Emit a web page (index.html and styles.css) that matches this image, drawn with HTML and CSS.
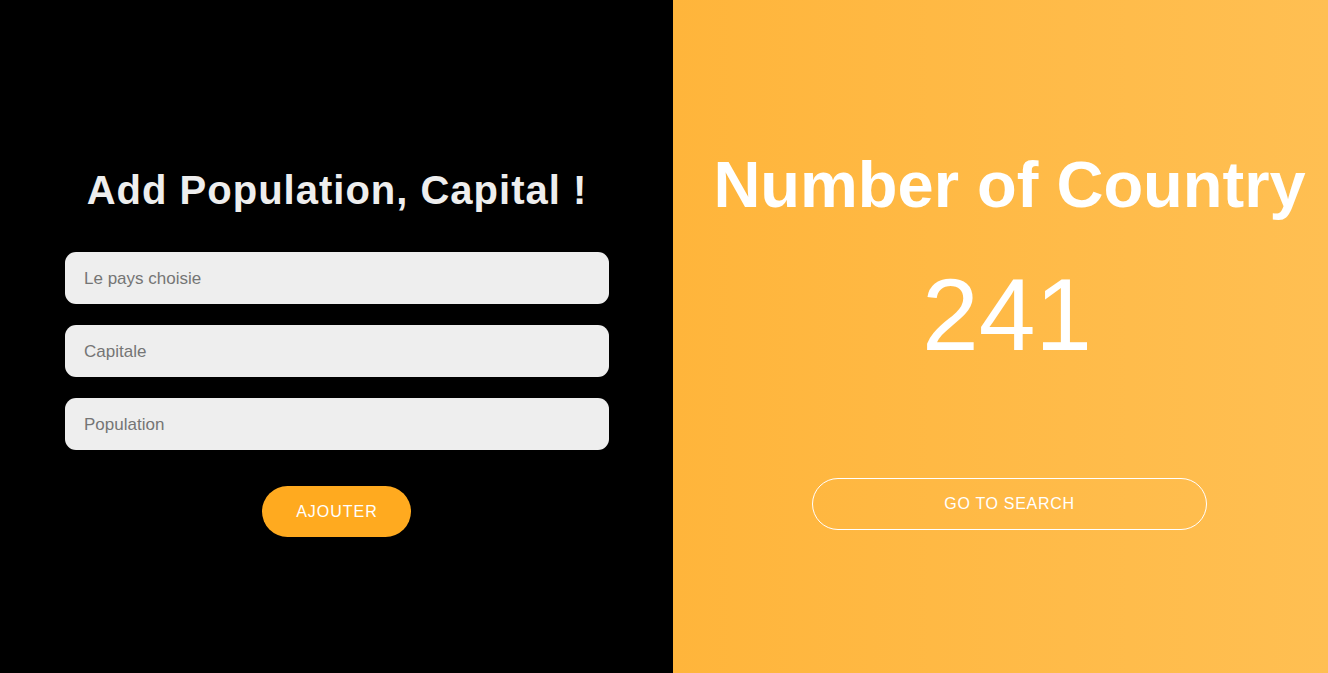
FILE: index.html
```html
<!DOCTYPE html>
<html lang="fr">
<head>
<meta charset="utf-8">
<title>Countries</title>
<link rel="stylesheet" href="styles.css">
</head>
<body>
<main class="page">
  <section class="panel-left">
    <h1 class="form-title">Add Population, Capital !</h1>
    <form class="form">
      <input class="field" type="text" placeholder="Le pays choisie">
      <input class="field" type="text" placeholder="Capitale">
      <input class="field" type="text" placeholder="Population">
      <button class="btn-add" type="button">AJOUTER</button>
    </form>
  </section>
  <section class="panel-right">
    <h2 class="count-title">Number of Country</h2>
    <div class="count">241</div>
    <button class="btn-search" type="button">GO TO SEARCH</button>
  </section>
</main>
</body>
</html>
```
FILE: styles.css
```css
* { box-sizing: border-box; }
html, body { margin: 0; padding: 0; height: 100%; }
body {
  font-family: "Liberation Sans", Arial, sans-serif;
  overflow: hidden;
}
.page {
  display: flex;
  width: 1328px;
  height: 673px;
}
.panel-left {
  width: 673px;
  flex: none;
  background: #000;
  padding: 166px 64px 0 65px;
  display: flex;
  flex-direction: column;
  align-items: center;
}
.form-title {
  margin: 0;
  font-size: 40px;
  line-height: 48px;
  font-weight: 700;
  letter-spacing: 1px;
  color: #eeeeee;
  text-align: center;
}
.form {
  margin-top: 38px;
  width: 544px;
  display: flex;
  flex-direction: column;
  align-items: center;
  gap: 21px;
}
.field {
  width: 100%;
  height: 52px;
  border: none;
  border-radius: 11px;
  background: #eeeeee;
  padding: 1px 19px 0;
  font-family: "Liberation Sans", Arial, sans-serif;
  font-size: 17px;
  color: #333;
  outline: none;
}
.field::placeholder { color: #757575; }
.btn-add {
  margin-top: 15px;
  margin-right: 1px;
  width: 149px;
  height: 51px;
  border: none;
  border-radius: 26px;
  background: #ffaa1f;
  color: #fff;
  font-family: "Liberation Sans", Arial, sans-serif;
  font-size: 16px;
  letter-spacing: 1px;
  padding: 0 0 0 1px;
}
.panel-right {
  flex: 1;
  min-width: 0;
  background: linear-gradient(90deg, #ffb53b 0%, #ffbf52 100%);
  padding: 146px 0 0 18px;
  display: flex;
  flex-direction: column;
  align-items: center;
  color: #fff;
}
.count-title {
  margin: 0;
  font-size: 65px;
  line-height: 78px;
  font-weight: 700;
  white-space: nowrap;
}
.count {
  margin-top: 40px;
  margin-right: 5px;
  font-size: 102px;
  line-height: 102px;
}
.btn-search {
  margin-top: 112px;
  width: 395px;
  height: 52px;
  border: 1px solid #fff;
  border-radius: 26px;
  background: transparent;
  color: #fff;
  font-family: "Liberation Sans", Arial, sans-serif;
  font-size: 16px;
  letter-spacing: 0.7px;
}
```
